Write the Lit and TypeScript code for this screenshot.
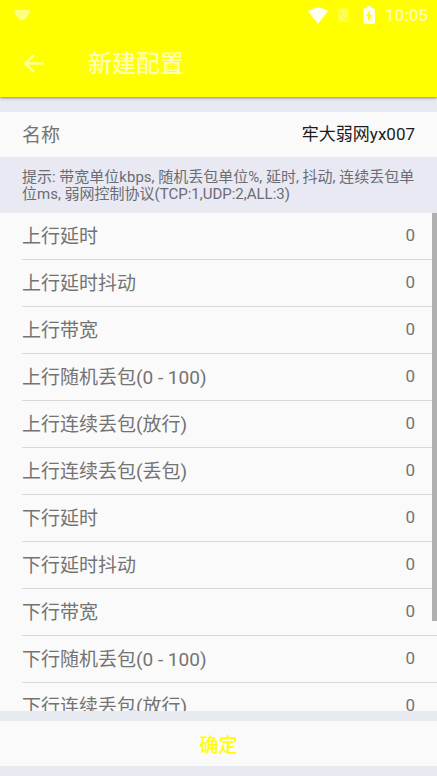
import { LitElement, html, css } from "lit";
import { customElement, property } from "lit/decorators.js";

const FIELDS = [
  "上行延时",
  "上行延时抖动",
  "上行带宽",
  "上行随机丢包(0 - 100)",
  "上行连续丢包(放行)",
  "上行连续丢包(丢包)",
  "下行延时",
  "下行延时抖动",
  "下行带宽",
  "下行随机丢包(0 - 100)",
  "下行连续丢包(放行)",
];

@customElement("status-bar")
class StatusBar extends LitElement {
  static styles = css`
    :host {
      display: flex;
      align-items: center;
      height: 30px;
      padding: 0 9px 0 13px;
      color: #ffffb4;
      font-size: 17px;
      font-weight: 500;
    }
    svg {
      display: block;
      flex: none;
    }
    .spacer {
      flex: 1;
    }
    .wifi {
      margin-right: 8px;
    }
    .sim {
      margin-right: 13px;
    }
    .battery {
      margin-right: 10px;
    }
  `;

  render() {
    return html`
      <svg width="18" height="12" viewBox="0 0 18 12" aria-hidden="true">
        <path d="M1 1H17L16 5L12 10L9 11L6 10L2 5Z" fill="#ffff8c" />
        <path d="M4 4L6 6L9 4L12 6L14 4" fill="none" stroke="#ffff50" />
      </svg>
      <span class="spacer"></span>
      <svg class="wifi" width="20" height="17" viewBox="0 0 20 17" aria-hidden="true">
        <path d="M0 4Q10 -3 20 4L10 17Z" fill="#fffff4" />
      </svg>
      <svg class="sim" width="14" height="16" viewBox="0 0 14 16" aria-hidden="true">
        <path d="M5 1H12V12L3 3ZM2 5L12 15H2Z" fill="#ffff46" />
        <path d="M1 2L13 14M13 2L3 13" stroke="#ffff78" />
      </svg>
      <svg class="battery" width="12" height="18" viewBox="0 0 12 18" aria-hidden="true">
        <path
          d="M4 0H8V2H10Q12 2 12 4V16Q12 18 10 18H2Q0 18 0 16V4Q0 2 2 2H4ZM7 4L3 10H5V15L9 9H7Z"
          fill="#ffffe6"
          fill-rule="evenodd"
        />
      </svg>
      <time>10:05</time>
    `;
  }
}

@customElement("config-row")
class ConfigRow extends LitElement {
  @property() label = "";
  @property() value = "0";

  static styles = css`
    :host {
      display: block;
      padding-left: 22px;
    }
    .row {
      display: flex;
      align-items: center;
      height: 46px;
      padding-right: 22px;
      border-bottom: 1px solid #dadada;
    }
    label {
      flex: none;
      padding-top: 2px;
      color: #737373;
      font-size: 19px;
      line-height: 28px;
    }
    input {
      flex: 1;
      min-width: 0;
      padding: 0 0 2px;
      border: 0;
      outline: 0;
      background: transparent;
      color: #737373;
      font: inherit;
      font-size: 17px;
      line-height: 24px;
      text-align: right;
    }
    :host([plain]) .row {
      height: 45px;
      border-bottom: 0;
    }
    :host([plain]) input {
      color: #1c1c1c;
    }
  `;

  render() {
    return html`
      <div class="row">
        <label for="field">${this.label}</label>
        <input id="field" type="text" .value=${this.value} />
      </div>
    `;
  }
}

@customElement("app-root")
class AppRoot extends LitElement {
  static styles = css`
    :host {
      display: flex;
      flex-direction: column;
      height: 100vh;
      box-sizing: border-box;
      padding-bottom: 10px;
      background: #e8eaf2;
      font-family: Roboto, "Noto Sans CJK SC", sans-serif;
    }
    header {
      flex: none;
      background: #ffff00;
      box-shadow: 0 1px 3px rgba(60, 50, 110, 0.6);
    }
    .toolbar {
      display: flex;
      align-items: center;
      height: 67px;
      padding-left: 22px;
      gap: 42px;
    }
    .back {
      display: block;
      padding: 0;
      border: 0;
      background: transparent;
    }
    .back svg {
      display: block;
    }
    h1 {
      margin: 0;
      color: #ffffb4;
      font-size: 24px;
      line-height: 36px;
      font-weight: 500;
    }
    .name {
      flex: none;
      margin-top: 15px;
      background: #fafafa;
    }
    .hint {
      flex: none;
      margin: 0;
      padding: 12px 22px 10px;
      background: #e8e9f2;
      color: #6c6c72;
      font-size: 15px;
      line-height: 17px;
    }
    .panel {
      position: relative;
      flex: 1;
      min-height: 0;
      background: #fafafa;
    }
    .list {
      height: 100%;
      overflow-y: auto;
      scrollbar-width: none;
    }
    .thumb {
      position: absolute;
      top: 0;
      right: 0;
      width: 5px;
      height: 82%;
      background: #b0b0b0;
    }
    .confirm {
      flex: none;
      height: 45px;
      margin-top: 10px;
      padding: 0;
      border: 0;
      background: #fafafa;
      color: #ffff00;
      font: inherit;
      font-size: 19px;
      font-weight: 500;
    }
  `;

  render() {
    return html`
      <header>
        <status-bar></status-bar>
        <div class="toolbar">
          <button class="back" aria-label="返回">
            <svg width="24" height="24" viewBox="0 0 24 24">
              <path
                d="M12 3L3 11.500L12 20M3 11.500H22"
                fill="none"
                stroke="#ffffc8"
                stroke-width="2"
              />
            </svg>
          </button>
          <h1>新建配置</h1>
        </div>
      </header>
      <config-row class="name" plain label="名称" value="牢大弱网yx007"></config-row>
      <p class="hint">
        提示: 带宽单位kbps, 随机丢包单位%, 延时, 抖动, 连续丢包单位ms, 弱网控制协议(TCP:1,UDP:2,ALL:3)
      </p>
      <div class="panel">
        <div class="list">
          ${FIELDS.map((label) => html`<config-row label=${label}></config-row>`)}
        </div>
        <div class="thumb"></div>
      </div>
      <button class="confirm">确定</button>
    `;
  }
}
